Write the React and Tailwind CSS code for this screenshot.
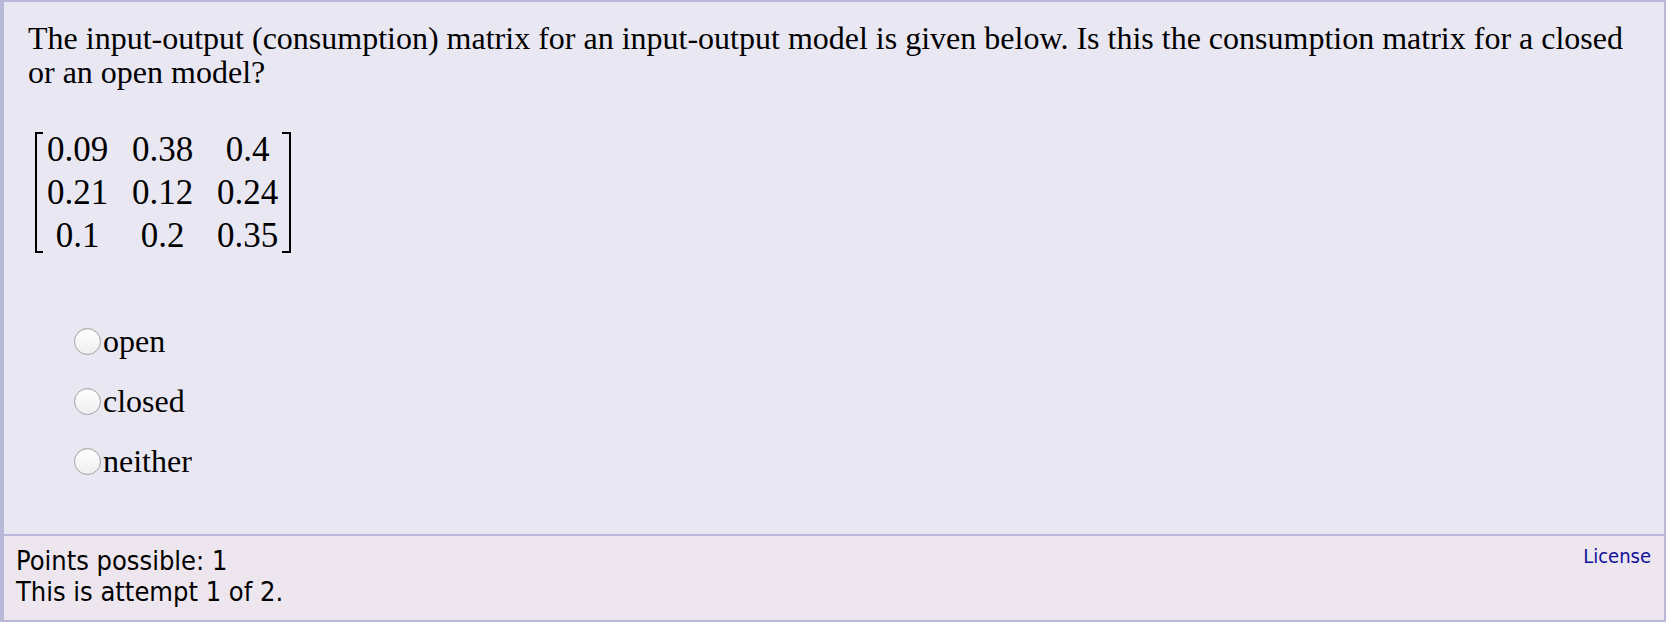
import React from "react";

const serif = { fontFamily: '"Liberation Serif", "Times New Roman", serif' };

const matrix = [
  ["0.09", "0.38", "0.4"],
  ["0.21", "0.12", "0.24"],
  ["0.1", "0.2", "0.35"],
];

const choices = ["open", "closed", "neither"];

function Radio() {
  return (
    <span className="block w-[27px] h-[27px] rounded-full border border-[#a3a3a3] bg-gradient-to-b from-white to-[#eeeeee] shadow-[inset_0_1px_1px_rgba(0,0,0,0.08)] shrink-0" />
  );
}

function Matrix() {
  return (
    <div className="flex items-stretch h-[129px] mt-[39px] ml-[7px]">
      <div className="w-[8px] my-[4px] border-l-2 border-y-2 border-black" />
      <div className="grid grid-cols-[65px_65px_65px] gap-x-[20px] items-center pl-[2px] pr-[2px] text-[35px] leading-[43px] text-black" style={serif}>
        {matrix.flat().map((v, i) => (
          <span key={i} className="text-center">{v}</span>
        ))}
      </div>
      <div className="w-[9px] my-[4px] border-r-2 border-y-2 border-black" />
    </div>
  );
}

export default function App() {
  return (
    <div className="w-full h-[622px] border-2 border-l-4 border-[#b8b8d8] flex flex-col bg-white">
      <div className="flex-1 bg-[#e9e7f2] pt-[19px] pl-[24px] pr-[24px]" style={serif}>
        <p className="text-[32px] leading-[34px] text-black">
          The input-output (consumption) matrix for an input-output model is given below. Is this the consumption matrix for a closed or an open model?
        </p>
        <Matrix />
        <div className="mt-[54px] ml-[46px] flex flex-col">
          {choices.map((c) => (
            <label key={c} className="flex items-center h-[60px] text-[32px] leading-[34px] text-black">
              <Radio />
              <span className="ml-[2px]">{c}</span>
            </label>
          ))}
        </div>
      </div>
      <div
        className="h-[86px] border-t-2 border-[#b8b8d8] bg-[#ede6ee] flex justify-between pl-[12px] pr-[13px] pt-[5px]"
        style={{ fontFamily: '"DejaVu Sans Condensed", "DejaVu Sans", sans-serif' }}
      >
        <div className="mt-[4px] text-[27px] leading-[31px] text-black">
          <div>Points possible: 1</div>
          <div>This is attempt 1 of 2.</div>
        </div>
        <a className="text-[20px] leading-[24px] text-[#10109a] mt-[3px]">License</a>
      </div>
    </div>
  );
}
